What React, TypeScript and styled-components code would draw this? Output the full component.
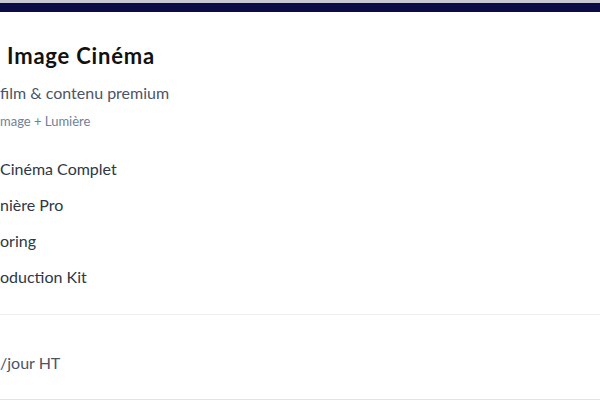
import styled, { createGlobalStyle } from "styled-components";

const GlobalStyle = createGlobalStyle`
  html, body {
    margin: 0;
    padding: 0;
    background: #ffffff;
    font-family: Lato, "Noto Sans", sans-serif;
    overflow: hidden;
  }
`;

const Stripe = styled.div`
  height: 9px;
  background: #0b0b45;
  border-top: 3px solid #c9c9d3;
`;

const Card = styled.section`
  display: flex;
  flex-direction: column;
  height: 388px;
  border-bottom: 1px solid #e2e2e2;
  box-sizing: border-box;
`;

const Head = styled.div`
  display: flex;
  flex-direction: column;
  padding: 29px 0 0 0;
`;

const Title = styled.h2`
  margin: 0;
  font-size: 22px;
  font-weight: 700;
  letter-spacing: 0.8px;
  color: #111111;
  line-height: 30px;
  padding-left: 7px;
`;

const Subtitle = styled.p`
  margin: 10px 0 0;
  font-size: 16px;
  color: #4a5568;
  line-height: 24px;
`;

const Tag = styled.p`
  margin: 6px 0 0;
  font-size: 13px;
  color: #718096;
  line-height: 20px;
`;

const Items = styled.ul`
  list-style: none;
  margin: 26px 0 0;
  padding: 0 0 25px;
  display: flex;
  flex-direction: column;
  gap: 12px;
  border-bottom: 1px solid #eeeeee;
`;

const Item = styled.li`
  font-size: 16px;
  color: #2d3748;
  line-height: 24px;
  white-space: nowrap;
`;

const Footer = styled.div`
  display: flex;
  align-items: center;
  padding-top: 36px;
`;

const Price = styled.span`
  font-size: 16px;
  line-height: 24px;
  color: #4a5568;
`;

const items = ["Cinéma Complet", "nière Pro", "oring", "oduction Kit"];

export default function App() {
  return (
    <>
      <GlobalStyle />
      <Stripe />
      <Card>
        <Head>
          <Title>Image Cinéma</Title>
          <Subtitle>film &amp; contenu premium</Subtitle>
          <Tag>mage + Lumière</Tag>
        </Head>
        <Items>
          {items.map((item) => (
            <Item key={item}>{item}</Item>
          ))}
        </Items>
        <Footer>
          <Price>/jour HT</Price>
        </Footer>
      </Card>
    </>
  );
}
